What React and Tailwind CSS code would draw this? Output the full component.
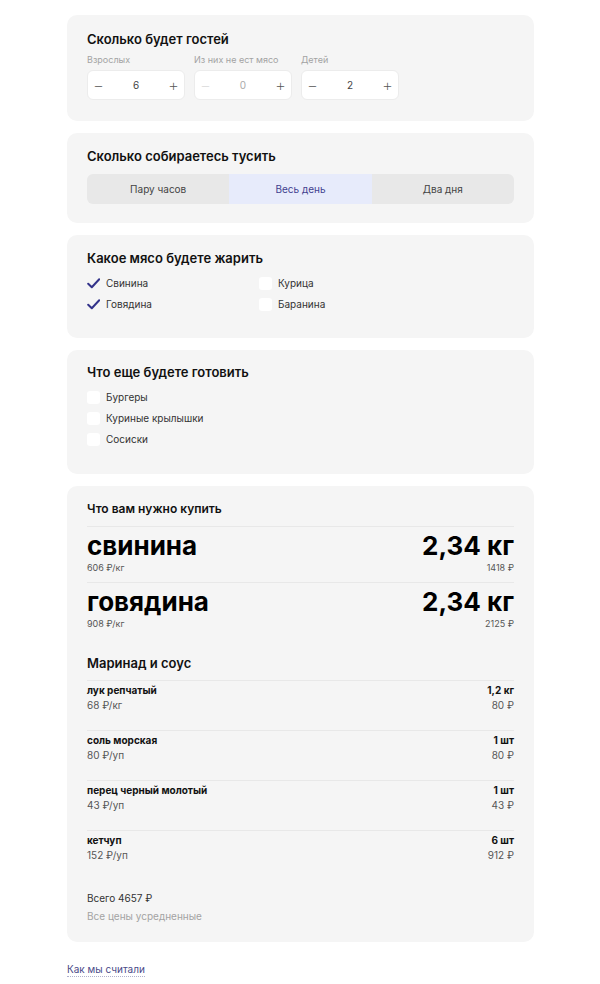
import React, { useState } from 'react';

const font = { fontFamily: 'Inter, "Noto Sans", sans-serif' };

const Card = ({ children, className = '' }) => (
  <div className={`bg-[#f5f5f5] rounded-[10px] px-5 ${className}`}>{children}</div>
);

const Stepper = ({ label, value, disabledMinus }) => (
  <div className="flex flex-col">
    <div className="text-[9px] text-[#a3a3a3] h-[12px] leading-[12px] mb-[4px]">{label}</div>
    <div className="w-[98px] h-[30px] bg-white rounded-[6px] border border-[#ececec] flex items-center justify-between px-[5px] text-[#555]">
      <span className={`text-[17px] font-extralight leading-none ${disabledMinus ? 'text-[#d8d8d8]' : 'text-[#555]'}`}>−</span>
      <span className={`text-[10px] ${disabledMinus ? 'text-[#aaa]' : 'text-[#444]'}`}>{value}</span>
      <span className="text-[17px] font-extralight leading-none text-[#555]">+</span>
    </div>
  </div>
);

const Check = ({ checked, label }) => (
  <div className="flex items-center gap-[6px] h-[21px]">
    {checked ? (
      <svg width="13" height="13" viewBox="0 0 13 13" className="shrink-0">
        <path d="M1.2 6.8 L4.8 10.3 L12.2 2.3" fill="none" stroke="#33338a" strokeWidth="2" strokeLinecap="round" strokeLinejoin="round" />
      </svg>
    ) : (
      <span className="w-[13px] h-[13px] bg-white rounded-[3px] shrink-0" />
    )}
    <span className="text-[10px] text-[#333]">{label}</span>
  </div>
);

const Line = ({ name, unit, qty, sum }) => (
  <div className="border-t border-[#e8e8e8] pt-[2px] pb-[18px]">
    <div className="flex justify-between text-[10px] font-bold text-[#111] leading-[14px]">
      <span>{name}</span>
      <span>{qty}</span>
    </div>
    <div className="flex justify-between text-[10px] text-[#555] leading-[14px] mt-[1px]">
      <span>{unit}</span>
      <span>{sum}</span>
    </div>
  </div>
);

const Big = ({ name, unit, qty, sum }) => (
  <div className="border-t border-[#e8e8e8] pt-[4px] pb-[8px]">
    <div className="flex justify-between items-end text-[26px] font-bold text-black leading-[30px]">
      <span>{name}</span>
      <span>{qty}</span>
    </div>
    <div className="flex justify-between text-[9px] text-[#555] leading-[12px] mt-[1px]">
      <span>{unit}</span>
      <span>{sum}</span>
    </div>
  </div>
);

export default function App() {
  const [mode, setMode] = useState(1);
  const modes = ['Пару часов', 'Весь день', 'Два дня'];

  return (
    <div className="bg-white min-h-[984px] pt-[15px] pl-[67px] pr-[66px]" style={font}>
      <div className="flex flex-col gap-[12px]">
        <Card className="pt-[15px] pb-[21px]">
          <h2 className="text-[13px] font-semibold text-[#111] leading-[18px] mb-[6px]">Сколько будет гостей</h2>
          <div className="flex gap-[9px]">
            <Stepper label="Взрослых" value="6" />
            <Stepper label="Из них не ест мясо" value="0" disabledMinus />
            <Stepper label="Детей" value="2" />
          </div>
        </Card>

        <Card className="pt-[14px] pb-[19px]">
          <h2 className="text-[13px] font-semibold text-[#111] leading-[18px] mb-[9px]">Сколько собираетесь тусить</h2>
          <div className="grid grid-cols-3 h-[30px] rounded-[6px] overflow-hidden bg-[#e8e8e8]">
            {modes.map((m, i) => (
              <button
                key={m}
                onClick={() => setMode(i)}
                className={`text-[10px] ${mode === i ? 'bg-[#e7ebfb] text-[#3f3f8f]' : 'text-[#444]'}`}
              >
                {m}
              </button>
            ))}
          </div>
        </Card>

        <Card className="pt-[14px] pb-[23px]">
          <h2 className="text-[13px] font-semibold text-[#111] leading-[18px] mb-[6px]">Какое мясо будете жарить</h2>
          <div className="grid grid-cols-[172px_1fr]">
            <Check checked label="Свинина" />
            <Check label="Курица" />
            <Check checked label="Говядина" />
            <Check label="Баранина" />
          </div>
        </Card>

        <Card className="pt-[13px] pb-[24px]">
          <h2 className="text-[13px] font-semibold text-[#111] leading-[18px] mb-[6px]">Что еще будете готовить</h2>
          <Check label="Бургеры" />
          <Check label="Куриные крылышки" />
          <Check label="Сосиски" />
        </Card>

        <Card className="pt-[15px] pb-[19px]">
          <h2 className="text-[12px] font-semibold text-[#111] leading-[16px] mb-[9px]">Что вам нужно купить</h2>
          <Big name="свинина" unit="606 ₽/кг" qty="2,34 кг" sum="1418 ₽" />
          <Big name="говядина" unit="908 ₽/кг" qty="2,34 кг" sum="2125 ₽" />
          <h3 className="text-[13px] font-semibold text-[#111] leading-[18px] mt-[16px] mb-[8px]">Маринад и соус</h3>
          <Line name="лук репчатый" unit="68 ₽/кг" qty="1,2 кг" sum="80 ₽" />
          <Line name="соль морская" unit="80 ₽/уп" qty="1 шт" sum="80 ₽" />
          <Line name="перец черный молотый" unit="43 ₽/уп" qty="1 шт" sum="43 ₽" />
          <Line name="кетчуп" unit="152 ₽/уп" qty="6 шт" sum="912 ₽" />
          <div className="text-[10px] text-[#333] leading-[14px] mt-[11px]">Всего 4657 ₽</div>
          <div className="text-[10px] text-[#a3a3a3] leading-[14px] mt-[4px]">Все цены усредненные</div>
        </Card>
      </div>

      <a href="#" className="inline-block mt-[21px] text-[10px] text-[#4a4a88] border-b border-dotted border-[#b0b0cc] leading-[13px]">
        Как мы считали
      </a>
    </div>
  );
}
